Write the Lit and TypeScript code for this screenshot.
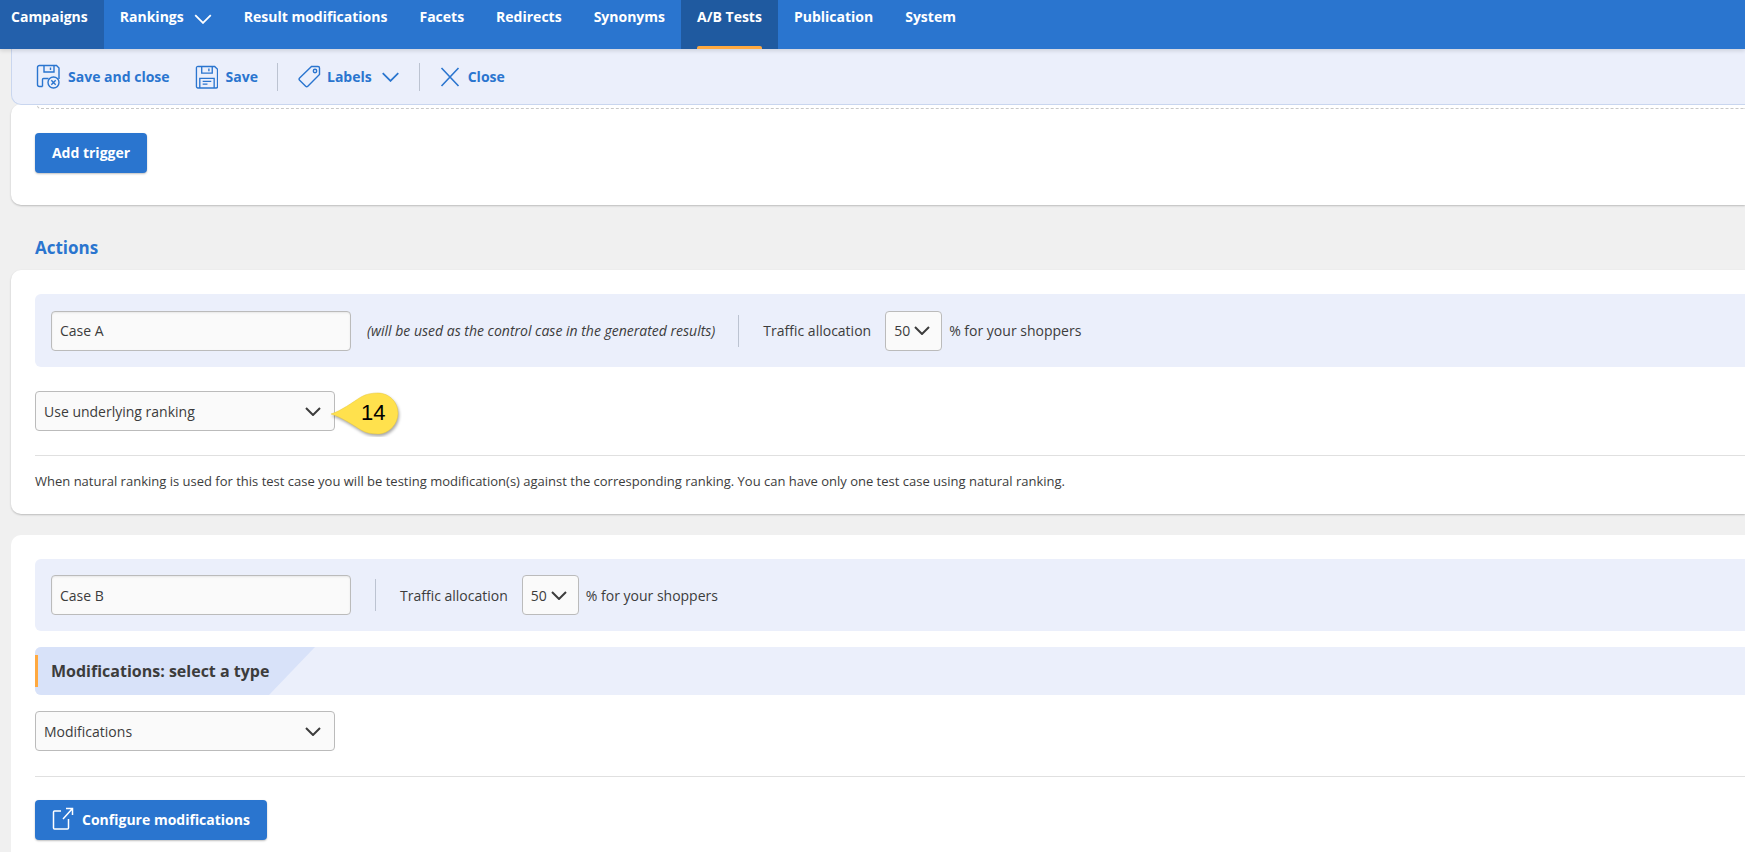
// import stuff
import { LitElement, html, css, svg } from 'lit';
import { customElement } from 'lit/decorators.js';

// thin chevrons sit on the blue bars, the heavier ones inside form controls
const chevron = (w: number, h: number, weight = 1.6) => html`
  <svg class="chev" width=${w} height=${h} viewBox="0 0 16 9" fill="none" stroke="currentColor" stroke-width=${weight}>
    <path d="M1 1l7 7 7-7"></path>
  </svg>`;

const floppyBody = svg`
  <path d="M8 1.5h12.5l2.5 2.5v11"></path>
  <path d="M8 1.5h-4.5a2 2 0 0 0-2 2v17a2 2 0 0 0 2 2h3"></path>
  <path d="M8 1.5v6.5h10v-6.5"></path>
  <path d="M14.5 3.5v2.5"></path>
`;

@customElement('app-root')
export class AppRoot extends LitElement {
  static styles = css`
    :host {
      display: flex;
      flex-direction: column;
      height: 100vh;
      overflow: hidden;
      background: #f0f0f0;
      font-family: 'Open Sans', 'Noto Sans', sans-serif;
      font-size: 14px;
      color: #3c3c3c;
    }

    /* top navigation */
    .nav {
      position: relative;
      z-index: 2;
      flex: none;
      display: flex;
      height: 49px;
      background: #2a75cf;
      box-shadow: 0 2px 4px rgba(0, 0, 0, 0.12);
    }
    .nav-item {
      position: relative;
      display: flex;
      align-items: flex-start;
      gap: 10px;
      padding: 7px 16px 0;
      line-height: 20px;
      color: #fff;
      font-size: 14px;
      font-weight: 700;
      white-space: nowrap;
    }
    .nav-item:first-child {
      padding-left: 11px;
      background: #2360ab;
    }
    .nav-item .chev {
      margin-top: 7px;
    }
    .nav-item.active {
      background: #1f5aa0;
    }
    .nav-item.active::after {
      content: '';
      position: absolute;
      left: 16px;
      right: 16px;
      bottom: 0;
      height: 3px;
      border-radius: 2px 2px 0 0;
      background: #ffa940;
    }

    /* save / labels / close bar */
    .toolbar {
      position: relative;
      z-index: 1;
      flex: none;
      box-sizing: border-box;
      display: flex;
      align-items: center;
      height: 56px;
      margin-left: 11px;
      padding: 0 0 0 24px;
      background: #ebeffb;
      border: 1px solid #c9d6ef;
      border-width: 0 0 1px 1px;
      border-radius: 0 0 0 10px;
      color: #2a75cf;
      font-weight: 700;
    }
    .tool {
      display: flex;
      align-items: center;
      gap: 8px;
      white-space: nowrap;
    }
    .tool svg {
      flex: none;
    }
    .tool-save {
      margin-left: 25px;
    }
    .tool-labels {
      gap: 6px;
    }
    .tool-labels .chev {
      margin-left: 3px;
    }
    .tool-sep {
      width: 1px;
      height: 28px;
      margin: 0 20px 0 19px;
      background: #bcc3d1;
    }

    /* white cards */
    .card {
      flex: none;
      margin-left: 11px;
      padding: 24px 0 0 24px;
      background: #fff;
      border-radius: 10px 0 0 10px;
      box-shadow: 0 1px 2px rgba(0, 0, 0, 0.22);
    }
    .card.triggers {
      height: 101px;
      box-sizing: border-box;
      margin-top: -1px;
      padding-top: 0;
    }
    .card.case-a {
      height: 244px;
      box-sizing: border-box;
    }
    .card.case-b {
      flex: 1;
      margin-top: 21px;
      box-shadow: none;
      border-radius: 10px 0 0 0;
    }
    .dashed {
      height: 4px;
      margin: 0 0 24px 2px;
      border: 1px dashed #c8c8c8;
      border-width: 0 0 1px 1px;
      border-radius: 0 0 0 4px;
    }
    .btn {
      display: inline-flex;
      align-items: center;
      justify-content: center;
      gap: 8px;
      box-sizing: border-box;
      height: 40px;
      padding-bottom: 2px;
      border-radius: 4px;
      background: #2a75cf;
      box-shadow: 0 1px 2px rgba(0, 0, 0, 0.25);
      color: #fff;
      font-weight: 700;
      white-space: nowrap;
    }
    .btn.add {
      width: 112px;
    }
    .btn.configure {
      width: 232px;
    }
    .section-title {
      flex: none;
      margin: 31px 0 10px 35px;
      line-height: 24px;
      font-size: 17px;
      font-weight: 700;
      color: #2a75cf;
    }

    /* tinted row with the case name */
    .case-row {
      box-sizing: border-box;
      display: flex;
      align-items: center;
      height: 73px;
      padding-left: 16px;
      background: #ebeffb;
      border-radius: 6px 0 0 6px;
    }
    .case-b .case-row {
      height: 72px;
    }
    .case-name {
      box-sizing: border-box;
      width: 300px;
      height: 40px;
      padding: 0 8px;
      border: 1px solid #bbb;
      border-radius: 4px;
      background: #fafafa;
      box-shadow: inset 0 1px 2px rgba(0, 0, 0, 0.08);
      font: inherit;
      color: inherit;
    }
    .note {
      margin: 0 -1px 0 16px;
      font-style: italic;
      white-space: nowrap;
    }
    .row-sep {
      width: 1px;
      height: 32px;
      margin: 0 24px;
      background: #bcc3d1;
    }
    .alloc {
      white-space: nowrap;
    }
    .pct {
      box-sizing: border-box;
      display: flex;
      align-items: center;
      gap: 4px;
      width: 57px;
      height: 40px;
      margin: 0 7px 0 14px;
      padding-left: 8px;
      border: 1px solid #bbb;
      border-radius: 4px;
      background: #fafafa;
    }
    .select {
      box-sizing: border-box;
      display: flex;
      align-items: center;
      justify-content: space-between;
      width: 300px;
      height: 40px;
      padding: 0 13px 0 8px;
      border: 1px solid #bbb;
      border-radius: 4px;
      background: #fafafa;
    }
    .select-wrap {
      position: relative;
      margin-top: 24px;
    }
    .case-b .select-wrap {
      margin-top: 16px;
    }
    .chev {
      flex: none;
    }
    .callout {
      position: absolute;
      left: 295px;
      top: 0;
      width: 72px;
      height: 46px;
    }
    .callout-num {
      position: absolute;
      left: 326px;
      top: 8px;
      font-family: 'Liberation Sans', Arial, sans-serif;
      font-size: 22px;
      line-height: 28px;
      color: #000;
    }
    .rule {
      height: 1px;
      margin-top: 24px;
      background: #e0e0e0;
    }
    .hint {
      margin-top: 16px;
      line-height: 18px;
      font-size: 13px;
      white-space: nowrap;
    }

    /* modifications heading with slanted tab */
    .banner {
      position: relative;
      display: flex;
      align-items: center;
      height: 48px;
      margin-top: 16px;
      padding-left: 16px;
      background: #ebeffb;
      border-radius: 6px 0 0 6px;
      font-size: 16px;
      font-weight: 700;
      overflow: hidden;
    }
    .banner::before {
      content: '';
      position: absolute;
      left: 0;
      top: 0;
      width: 280px;
      height: 48px;
      background: #d8e2f9;
      clip-path: polygon(0 0, 100% 0, 234px 100%, 0 100%);
    }
    .banner::after {
      content: '';
      position: absolute;
      left: 0;
      top: 8px;
      width: 3px;
      height: 32px;
      background: #ffa940;
    }
    .banner span {
      position: relative;
    }
    .case-b .rule {
      margin-top: 25px;
    }
    .case-b .btn {
      margin-top: 23px;
    }
  `;

  // case name row, the note only shows on the control case
  renderCaseRow(name: string, note?: string) {
    return html`
      <div class="case-row">
        <input class="case-name" .value=${name} />
        ${note ? html`<span class="note">${note}</span>` : ''}
        <div class="row-sep"></div>
        <span class="alloc">Traffic allocation</span>
        <div class="pct">50 ${chevron(16, 9, 2)}</div>
        <span class="alloc">% for your shoppers</span>
      </div>
    `;
  }

  render() {
    const navItems = ['Result modifications', 'Facets', 'Redirects', 'Synonyms'];
    return html`
      <div class="nav">
        <div class="nav-item">Campaigns</div>
        <div class="nav-item">Rankings ${chevron(18, 10)}</div>
        ${navItems.map((item) => html`<div class="nav-item">${item}</div>`)}
        <div class="nav-item active">A/B Tests</div>
        <div class="nav-item">Publication</div>
        <div class="nav-item">System</div>
      </div>

      <div class="toolbar">
        <div class="tool">
          <svg width="24" height="25" viewBox="0 0 24 25" fill="none" stroke="currentColor" stroke-width="1.4">
            ${floppyBody}
            <path d="M6.5 22.5v-7a1 1 0 0 1 1-1h5"></path>
            <circle cx="17.5" cy="18.5" r="5.5"></circle>
            <path d="M15.3 16.3l4.4 4.4M19.7 16.3l-4.4 4.4"></path>
          </svg>
          Save and close
        </div>
        <div class="tool tool-save">
          <svg width="23" height="24" viewBox="0 0 24 25" fill="none" stroke="currentColor" stroke-width="1.4">
            <path d="M3.5 1.5h17l3 3v18a1.5 1.5 0 0 1-1.5 1.5h-19a1.5 1.5 0 0 1-1.5-1.5v-19.5a1.5 1.5 0 0 1 2-1.5z"></path>
            <path d="M7 1.5v7h11v-7M14.5 3.5v3"></path>
            <path d="M5 24v-10h15v10M8 17h9M8 20h5"></path>
          </svg>
          Save
        </div>
        <div class="tool-sep"></div>
        <div class="tool tool-labels">
          <svg width="23" height="23" viewBox="0 0 23 23" fill="none" stroke="currentColor" stroke-width="1.4">
            <path d="M13.5 1.5h6.500a1.500 1.500 0 0 1 1.500 1.500v6.500l-11.700 11.800a1.500 1.500 0 0 1-2.100 0l-6.100-6.100a1.500 1.500 0 0 1 0-2.100z"></path>
            <circle cx="17" cy="6" r="1.7"></circle>
          </svg>
          Labels ${chevron(19, 10)}
        </div>
        <div class="tool-sep"></div>
        <div class="tool">
          <svg width="20" height="20" viewBox="0 0 19 20" fill="none" stroke="currentColor" stroke-width="1.6">
            <path d="M1 1l17 18M18 1l-17 18"></path>
          </svg>
          Close
        </div>
      </div>

      <div class="card triggers">
        <div class="dashed"></div>
        <div class="btn add">Add trigger</div>
      </div>

      <div class="section-title">Actions</div>

      <div class="card case-a">
        ${this.renderCaseRow('Case A', '(will be used as the control case in the generated results)')}
        <div class="select-wrap">
          <div class="select">Use underlying ranking ${chevron(16, 9, 2)}</div>
          <svg class="callout" viewBox="0 0 72 46">
            <path d="M1 23c10-3 22-12 30-17 5-3 11-4 17-4 11 0 20 9 20 20s-9 21-20 21c-6 0-12-1-17-4-8-5-20-13-30-16z"
              fill="#ffe14d" stroke="#e8c93c" stroke-width="0.5" style="filter:drop-shadow(1px 2px 1.5px rgba(0,0,0,.35))"></path>
          </svg>
          <span class="callout-num">14</span>
        </div>
        <div class="rule"></div>
        <div class="hint">When natural ranking is used for this test case you will be testing modification(s) against the corresponding ranking. You can have only one test case using natural ranking.</div>
      </div>

      <div class="card case-b">
        ${this.renderCaseRow('Case B')}
        <div class="banner"><span>Modifications: select a type</span></div>
        <div class="select-wrap">
          <div class="select">Modifications ${chevron(16, 9, 2)}</div>
        </div>
        <div class="rule"></div>
        <div class="btn configure">
          <svg width="22" height="24" viewBox="0 0 22 24" fill="none" stroke="currentColor" stroke-width="1.5">
            <path d="M9 4h-6.500a1 1 0 0 0-1 1v16a1 1 0 0 0 1 1h13a1 1 0 0 0 1-1v-9"></path>
            <path d="M11 12l9-10M14 1.500h6.500v6.500"></path>
          </svg>
          Configure modifications
        </div>
      </div>
    `;
  }
}
